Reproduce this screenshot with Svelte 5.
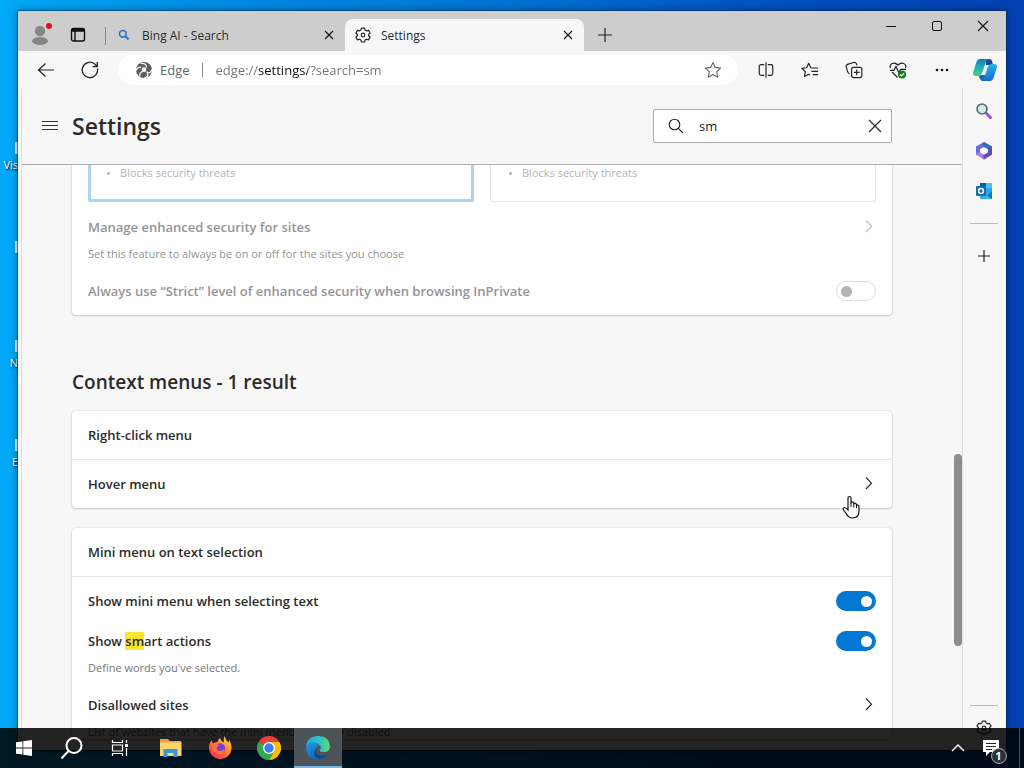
<script>
  let query = "sm";
  let address = "edge://settings/?search=sm";
  let miniMenu = true;
  let smartActions = true;
  let strict = false;

  const shortcuts = ["Vis", "", "N", "E"];
  const levels = [
    { text: "Blocks security threats", selected: true },
    { text: "Blocks security threats", selected: false }
  ];

  // stroke icons of the toolbar, drawn on a 20 x 20 grid
  const tools = [
    { name: "Split screen", d: "M8 4H4.500Q2.500 4 2.500 6v8Q2.500 16 4.500 16H8M12 4h3.500Q17.500 4 17.500 6v8Q17.500 16 15.500 16H12M10 1.500v17" },
    { name: "Favorites", d: "M12.500 7.800 10.800 7.500 8.500 2.500 6.200 7.500 1 8.200 4.800 11.900 3.900 17.300 8.500 14.800 10 15.600M12 7.800h7M11.500 11.500H19M13 15.200h6" },
    { name: "Collections", d: "M9.500 7h7q2.200 0 2.200 2.200v7q0 2.200-2.200 2.200h-7q-2.200 0-2.200-2.200v-7Q7.300 7 9.500 7zM13 9.500v6.400M9.800 12.700h6.400M5 14Q3.500 13.700 3 12L1.300 6.500Q.8 4.500 2.700 3.800L9.500 1.600Q11.800 1 12.700 3L13.300 4.800" }
  ];
</script>

<div class="desktop">
  <div class="shortcuts">
    {#each shortcuts as label}
      <div class="shortcut"><i></i><span>{label}</span></div>
    {/each}
  </div>

  <div class="window">
    <div class="tabstrip">
      <button class="avatar" aria-label="Profile">
        <svg width="24" height="26" viewBox="0 0 24 26">
          <circle cx="12" cy="12" r="5.200" fill="#858585" />
          <ellipse cx="12" cy="22" rx="8" ry="4" fill="#858585" />
          <circle cx="21" cy="7" r="3" fill="#e0101c" />
        </svg>
      </button>
      <button class="workspaces" aria-label="Tab actions">
        <svg width="16" height="16" viewBox="0 0 16 16" fill="none" stroke="#111" stroke-width="1.400">
          <rect x="1.500" y="1.500" width="13" height="12.500" rx="2" />
          <path d="M1.500 4h13M5 4v10" /><path d="M2 2.800h12" stroke-width="2.500" />
        </svg>
      </button>
      <span class="rule"></span>
      <div class="tab">
        <svg width="14" height="14" viewBox="0 0 14 14" fill="none" stroke="#2878c4" stroke-width="1.600">
          <circle cx="5.800" cy="5.800" r="3.300" /><path d="M8.300 8.300 11.500 11.500" stroke-width="2.200" />
        </svg>
        <span>Bing AI - Search</span>
        <button aria-label="Close tab">
          <svg width="10" height="10" viewBox="0 0 10 10" stroke="#111" stroke-width="1.100"><path d="m1 1 8 8M9 1 1 9" /></svg>
        </button>
      </div>
      <div class="tab active">
        <svg width="18" height="18" viewBox="0 0 20 20" fill="none" stroke="#222" stroke-width="1.300">
          <circle cx="10" cy="10" r="2" />
          <path d="M8.300 2.300h3.400l.6 2.200 1.500.9 2.300-.6 1.800 3L16.300 9.400v1.400l1.600 1.600-1.800 3-2.300-.7-1.500.9-.6 2.200H8.300l-.6-2.200-1.500-.9-2.300.7-1.800-3 1.700-1.600V9.400L2.100 7.800l1.800-3 2.300.6 1.500-.9z" stroke-linejoin="round" />
        </svg>
        <span>Settings</span>
        <button aria-label="Close tab">
          <svg width="10" height="10" viewBox="0 0 10 10" stroke="#111" stroke-width="1.100"><path d="m1 1 8 8M9 1 1 9" /></svg>
        </button>
      </div>
      <button class="newtab" aria-label="New tab">
        <svg width="14" height="14" viewBox="0 0 14 14" stroke="#222" stroke-width="1.200"><path d="M7 0v14M0 7h14" /></svg>
      </button>
      <div class="controls">
        <button aria-label="Minimize"><svg width="12" height="12" viewBox="0 0 12 12" stroke="#111"><path d="M1 6.500h10" /></svg></button>
        <button aria-label="Maximize"><svg width="12" height="12" viewBox="0 0 12 12" fill="none" stroke="#111"><rect x="1.500" y="1.500" width="9" height="9" rx="1.500" /></svg></button>
        <button aria-label="Close"><svg width="12" height="12" viewBox="0 0 12 12" stroke="#111" stroke-width="1.100"><path d="m1 1 10 10M11 1 1 11" /></svg></button>
      </div>
    </div>

    <div class="toolbar">
      <button class="tool" aria-label="Back">
        <svg width="18" height="18" viewBox="0 0 18 18" fill="none" stroke="#222" stroke-width="1.200"><path d="M17 9H1.500M8.500 2.500 1.500 9l7 6.500" /></svg>
      </button>
      <button class="tool" aria-label="Refresh">
        <svg width="18" height="18" viewBox="0 0 18 18" fill="none" stroke="#222" stroke-width="1.300"><path d="M16.500 7.500A7.700 7.700 0 1 1 13.500 2.700L16 5.200M16.300 1v4.700h-4.700" /></svg>
      </button>
      <div class="address">
        <svg width="16" height="16" viewBox="0 0 16 16">
          <circle cx="8" cy="8" r="8" fill="#5e5e5e" />
          <path d="M4.500 1.500Q11 .8 10.300 5.500M0 8.500Q1.500 4.300 5.200 5.300M3.800 14.500Q3.300 10 6.800 9.700M8.500 15.800Q13.500 14.500 11 10.500M15.800 7.500Q14.500 12.500 10.500 9.800" fill="none" stroke="#fff" stroke-width="1.200" />
          <circle cx="8" cy="7.700" r="2.400" fill="#fff" />
        </svg>
        <label for="address">Edge</label>
        <span class="rule"></span>
        <input id="address" type="text" bind:value={address} spellcheck="false" />
        <button aria-label="Add to favorites">
          <svg width="18" height="18" viewBox="0 0 18 18" fill="none" stroke="#666" stroke-width="1.100" stroke-linejoin="round"><path d="m9 1.500 2.300 4.900 5.300.7-3.900 3.700 1 5.400L9 13.600l-4.700 2.600 1-5.400L1.400 7.100l5.300-.7z" /></svg>
        </button>
      </div>
      {#each tools as tool}
        <button class="tool" aria-label={tool.name}>
          <svg width="18" height="18" viewBox="0 0 20 20" fill="none" stroke="#222" stroke-width="1.300" stroke-linejoin="round"><path d={tool.d} /></svg>
        </button>
      {/each}
      <button class="tool" aria-label="Browser essentials">
        <svg width="18" height="18" viewBox="0 0 18 18" fill="none" stroke="#222" stroke-width="1.200">
          <path d="M1.500 7C0 3 5 0 9 4c4-4 9-1 7.500 3M3 11l5.500 5.500M1 9.300h4l2-4 3 6.500 1.700-3.500H17" />
          <circle cx="13" cy="13.500" r="4" fill="#16801a" stroke="none" /><path d="m11.200 13.500 1.300 1.300 2.400-2.500" stroke="#fff" />
        </svg>
      </button>
      <button class="tool" aria-label="Settings and more">
        <svg width="16" height="4" viewBox="0 0 16 4" fill="#111"><circle cx="3" cy="2" r="1.300" /><circle cx="8" cy="2" r="1.300" /><circle cx="13" cy="2" r="1.300" /></svg>
      </button>
      <button class="tool copilot" aria-label="Copilot">
        <svg width="24" height="22" viewBox="0 0 24 22">
          <defs>
            <linearGradient id="cpa" x1="0" y1="0" x2="0" y2="1"><stop stop-color="#157fa8" /><stop offset=".5" stop-color="#20aec0" /><stop offset="1" stop-color="#55cd7d" /></linearGradient>
            <linearGradient id="cpb" x1="0" y1="0" x2="0" y2="1"><stop stop-color="#27b4e4" /><stop offset="1" stop-color="#1468dd" /></linearGradient>
          </defs>
          <path d="M12 0h4q2.500 0 3 2l1 4h-7z" fill="#164a91" />
          <path d="m5 16 2 4q.8 2 3 2h2l2-6z" fill="#1b6f9c" />
          <path d="M7 0h9q-2.500.5-3.300 3L10 12q-1.500 5-4.500 5H3q-4 0-2.800-4L3.500 3Q4.500 0 7 0z" fill="url(#cpa)" />
          <path d="M17 22H8q2.500-.5 3.300-3L14 10q1.500-5 4.500-5H21q4 0 2.800 4L20.500 19q-1 3-3.500 3z" fill="url(#cpb)" />
          <path d="M12.500 6H16q-1.500.7-2 2.500L12.300 14q-.6 2-2.300 2H8q1.300-.6 1.800-2.500l1.500-5.500q.4-1.500 1.200-2z" fill="#eefafc" />
        </svg>
      </button>
    </div>

    <div class="body">
      <main>
        <header>
          <button class="menu" aria-label="Settings menu">
            <svg width="16" height="12" viewBox="0 0 16 12" stroke="#333"><path d="M0 1.500h16M0 5.500h16M0 9.500h16" /></svg>
          </button>
          <h1>Settings</h1>
          <div class="search">
            <svg width="16" height="16" viewBox="0 0 16 16" fill="none" stroke="#222" stroke-width="1.100"><circle cx="6.500" cy="6.500" r="5.300" /><path d="m10.300 10.300 4.700 4.700" /></svg>
            <input type="text" aria-label="Search settings" bind:value={query} />
            <button aria-label="Clear search" on:click={() => (query = "")}>
              <svg width="14" height="14" viewBox="0 0 14 14" stroke="#222" stroke-width="1.100"><path d="m1 1 12 12M13 1 1 13" /></svg>
            </button>
          </div>
        </header>

        <div class="content">
          <section class="card security">
            <div class="levels">
              {#each levels as level}
                <div class="level" class:selected={level.selected}><ul><li>{level.text}</li></ul></div>
              {/each}
            </div>
            <div class="row">
              <span>Manage enhanced security for sites</span>
              <svg class="chevron" width="8" height="14" viewBox="0 0 8 14" fill="none" stroke="currentColor" stroke-width="1.200"><path d="m1 .5 5.500 5.700L1 12" /></svg>
            </div>
            <p>Set this feature to always be on or off for the sites you choose</p>
            <div class="row">
              <label for="strict">Always use “Strict” level of enhanced security when browsing InPrivate</label>
              <input id="strict" type="checkbox" role="switch" disabled bind:checked={strict} />
            </div>
          </section>

          <h2>Context menus - 1 result</h2>

          <section class="card">
            <div class="row head"><span>Right-click menu</span></div>
            <div class="row link">
              <span>Hover menu</span>
              <svg class="chevron" width="8" height="14" viewBox="0 0 8 14" fill="none" stroke="currentColor" stroke-width="1.200"><path d="m1 .5 5.500 5.700L1 12" /></svg>
            </div>
          </section>

          <section class="card mini">
            <div class="row head"><span>Mini menu on text selection</span></div>
            <div class="row">
              <label for="mini">Show mini menu when selecting text</label>
              <input id="mini" type="checkbox" role="switch" bind:checked={miniMenu} />
            </div>
            <div class="row">
              <label for="smart">Show <mark>sm</mark>art actions</label>
              <input id="smart" type="checkbox" role="switch" bind:checked={smartActions} />
            </div>
            <p>Define words you've selected.</p>
            <div class="row">
              <span>Disallowed sites</span>
              <svg class="chevron" width="8" height="14" viewBox="0 0 8 14" fill="none" stroke="currentColor" stroke-width="1.200"><path d="m1 .5 5.500 5.700L1 12" /></svg>
            </div>
            <p>List of websites that have the mini menu currently disabled</p>
          </section>
        </div>
        <div class="thumb"></div>
      </main>

      <aside>
        <button aria-label="Search">
          <svg width="18" height="18" viewBox="0 0 18 18"><path d="m11.500 11.500 4 4" stroke="#a04be6" stroke-width="3" stroke-linecap="round" /><circle cx="7" cy="7" r="5" fill="#c9ecee" stroke="#5c6468" stroke-width="1.600" /></svg>
        </button>
        <button aria-label="Microsoft 365">
          <svg width="18" height="18" viewBox="0 0 18 18">
            <path d="m9 0 8 4.500v4.300L9 5 5 7v7.500L1 12.500v-8z" fill="#6a6fd6" />
            <path d="m9 0 8 4.500V12l-4-1.500V7L7 3.500z" fill="#2d6fb8" />
            <path d="m1 12 4-2 4 3 4-2.500 4 2L9 18z" fill="#b07ae0" /><path d="m13 7 4-2.500v8L9 17l-1-3.500 5-3z" fill="#5a4bc0" />
            <circle cx="9" cy="9" r="3" fill="#fff" />
          </svg>
        </button>
        <button aria-label="Outlook">
          <svg width="18" height="18" viewBox="0 0 18 18">
            <rect x="5" y="1" width="12" height="16" rx="1" fill="#28a8ea" /><path d="M5 1h6v5H5z" fill="#0d5ea0" /><path d="M11 1h6v5h-6z" fill="#4cc0f0" />
            <path d="m17 9-8 8h8z" fill="#1470b8" /><path d="m8 11 9 6H7z" fill="#36b4e8" /><rect x="1" y="4" width="10" height="10" rx="1" fill="#0f6cbd" /><circle cx="6" cy="9" r="2.400" fill="none" stroke="#fff" stroke-width="1.500" />
          </svg>
        </button>
        <hr />
        <button aria-label="Customize">
          <svg width="12" height="12" viewBox="0 0 12 12" stroke="#222" stroke-width="1.200"><path d="M6 0v12M0 6h12" /></svg>
        </button>
        <hr class="last" />
        <button class="gear" aria-label="Sidebar settings">
          <svg width="18" height="18" viewBox="0 0 20 20" fill="none" stroke="#222" stroke-width="1.300">
            <circle cx="10" cy="10" r="2" />
            <path d="M8.300 2.300h3.400l.6 2.200 1.500.9 2.300-.6 1.800 3L16.300 9.400v1.400l1.600 1.600-1.800 3-2.300-.7-1.500.9-.6 2.200H8.300l-.6-2.200-1.500-.9-2.300.7-1.800-3 1.700-1.600V9.400L2.100 7.800l1.800-3 2.300.6 1.500-.9z" stroke-linejoin="round" />
          </svg>
        </button>
      </aside>
    </div>
  </div>

  <nav class="taskbar">
    <button aria-label="Start">
      <svg width="16" height="16" viewBox="0 0 16 16" fill="#fff"><path d="m0 2.300 6.500-.9v6.200H0zM7.300 1.300 16 0v7.600H7.300zM0 8.400h6.500v6.200L0 13.700zM7.300 8.400H16V16l-8.700-1.200z" /></svg>
    </button>
    <button aria-label="Search">
      <svg width="24" height="24" viewBox="0 0 24 24" fill="none" stroke="#fff" stroke-width="2"><circle cx="14" cy="9.500" r="7.500" /><path d="M8.500 15 1.500 22.500" /></svg>
    </button>
    <button aria-label="Task view">
      <svg width="18" height="16" viewBox="0 0 18 16" fill="none" stroke="#fff" stroke-width="1.200"><path d="M1.500 0v2.500h10V0M1.500 16v-2.500h10V16M1.500 5h10v6h-10zM15.500 0v3M15.500 8v8" /><path d="M14 4h3v3h-3z" fill="#fff" stroke="none" /></svg>
    </button>
    <span class="gap"></span>
    <button aria-label="File Explorer">
      <svg width="24" height="20" viewBox="0 0 24 20"><path d="M1 1h8l2 2h11v6H1z" fill="#e8a33a" /><path d="M1 4.500h21.500V18H1z" fill="#ffd56b" /><path d="M4.500 19v-8h14v8h-4v-4h-6v4z" fill="#3b9ad6" /></svg>
    </button>
    <button aria-label="Firefox">
      <svg width="24" height="24" viewBox="0 0 24 24">
        <defs><linearGradient id="ff" x1=".9" y1="0" x2=".2" y2="1"><stop stop-color="#ffe14a" /><stop offset=".45" stop-color="#ff8a27" /><stop offset="1" stop-color="#f2245c" /></linearGradient></defs>
        <path d="M3.500 4.500 5 7.500q2-1.500 4.500-1.500.5-2.500 2.500-4 .8 3 4 4.500Q15 3 16.500 0q1 4 4 6.500 1-1 .5-3 3 5 2.500 9.500A11.300 11.300 0 0 1 1 13q-.5-5 2.500-8.500z" fill="url(#ff)" />
        <circle cx="12" cy="12.500" r="5.300" fill="#7542d9" /><path d="M5 8.500q4-1.500 7 1-3 .3-3.200 2.600Q9 15 12 15q3.500 0 4.500-3 .5 6-5 6.500Q4 18 5 8.500z" fill="#ff7038" />
      </svg>
    </button>
    <button aria-label="Chrome">
      <svg width="24" height="24" viewBox="0 0 24 24">
        <path d="M12 12 1.600 6a12 12 0 0 1 20.800 0z" fill="#ea4335" /><path d="M12 12V6h10.400A12 12 0 0 1 12 24l5-9z" fill="#fbbc05" /><path d="M12 12 1.600 6A12 12 0 0 0 12 24l5.200-9z" fill="#34a853" />
        <circle cx="12" cy="12" r="6" fill="#fff" /><circle cx="12" cy="12" r="4.700" fill="#3b7ff0" />
      </svg>
    </button>
    <button class="running" aria-label="Microsoft Edge">
      <svg width="24" height="24" viewBox="0 0 24 24">
        <defs>
          <linearGradient id="ea" x1="0" y1="0" x2="1" y2="0"><stop stop-color="#29a6e8" /><stop offset=".6" stop-color="#30c4c0" /><stop offset="1" stop-color="#66dc65" /></linearGradient>
          <linearGradient id="eb" x1="0" y1="0" x2="1" y2="1"><stop stop-color="#1d9be6" /><stop offset="1" stop-color="#0c4c94" /></linearGradient>
        </defs>
        <path d="M0 11Q1 0 12.500 0 23.500.5 24 10.500 23.500 16 18 16q-4 0-4.500-1.500Q16 12 14 9.500 11 6.500 7 7.500 3 8 0 11z" fill="url(#ea)" />
        <path d="M0 11.500Q2.500 6 8 6.500q5 .5 6.500 5-4-2.500-5 2Q9.500 19 16 20q3 .3 6-2-4 6-10.500 6Q.5 23 0 11.500z" fill="url(#eb)" />
        <path d="M9.300 13.500Q9.500 19 15.500 20q3 .3 6.500-2-4 5-10 4-6-2-2.700-8.500z" fill="#0b4587" />
      </svg>
    </button>
    <span class="fill"></span>
    <button class="up" aria-label="Show hidden icons">
      <svg width="14" height="8" viewBox="0 0 14 8" fill="none" stroke="#fff" stroke-width="1.400"><path d="m1 7 6-6 6 6" /></svg>
    </button>
    <button aria-label="Notifications">
      <svg width="18" height="18" viewBox="0 0 18 18"><path d="M1 1h16v12H8l-4 4v-4H1z" fill="#fff" /><path d="M4 4.500h10M4 7.500h10M4 10.500h6" stroke="#222" /></svg>
      <b>1</b>
    </button>
    <span class="peek"></span>
  </nav>

  <svg class="pointer" width="18" height="24" viewBox="0 0 18 24">
    <path d="M6 14V3q0-1.500 1.500-1.500T9 3v5.500V7q2.800-.6 2.800 1.500 2.700-.6 2.700 1.500 2.500-.3 2.500 2v4q0 7-6.500 7Q6.500 23 4.500 19L1.200 14.500Q.8 12.500 2.500 12.500 4 12.500 6 15z" fill="#fff" stroke="#111" stroke-width="1.200" />
    <path d="M9 8v4M11.800 9v3.500M14.500 10v3" stroke="#111" />
  </svg>
</div>

<style>
  :global(body) {
    margin: 0;
  }
  .desktop {
    position: relative;
    height: 100vh;
    overflow: hidden;
    background: linear-gradient(90deg, #00a8f6 0, #008de4 20%, #0072d4 50%, #0052c0 75%, #0340b3 100%);
    font-family: "Open Sans", "Noto Sans", sans-serif;
    font-size: 13px;
    color: #2b2b2b;
  }
  button {
    display: flex;
    align-items: center;
    justify-content: center;
    flex: none;
    padding: 0;
    border: 0;
    background: none;
    font: inherit;
  }
  svg {
    flex: none;
  }

  .shortcuts {
    width: 18px;
    padding-top: 142px;
    overflow: hidden;
  }
  .shortcut {
    display: flex;
    flex-direction: column;
    align-items: flex-end;
    height: 99px;
    font-size: 11px;
    line-height: 16px;
    color: #fff;
    text-shadow: 1px 1px 2px #000;
  }
  .shortcut i {
    width: 3px;
    height: 12px;
    margin-bottom: 3px;
    background: #d5e9f5;
  }

  .window {
    position: absolute;
    inset: 11px 18px 18px;
    display: flex;
    flex-direction: column;
    background: #f7f7f7;
    box-shadow: 0 0 0 1px rgba(0, 40, 80, 0.5), 0 0 8px rgba(0, 0, 0, 0.4);
  }
  .tabstrip {
    display: flex;
    align-items: flex-end;
    height: 40px;
    background: #cdcdcd;
    font-size: 12px;
  }
  .avatar {
    width: 24px;
    height: 38px;
    margin-left: 10px;
  }
  .workspaces {
    width: 24px;
    height: 32px;
    margin: 0 15px 0 14px;
  }
  .rule {
    width: 1px;
    height: 18px;
    background: #888;
  }
  .tabstrip .rule {
    margin-bottom: 6px;
  }
  .tab {
    display: flex;
    align-items: center;
    flex: 0 1 239px;
    min-width: 0;
    height: 32px;
    box-sizing: border-box;
    padding: 0 8px 0 11px;
    border-radius: 8px 8px 0 0;
  }
  .tab span {
    flex: 1;
    padding-left: 11px;
    white-space: nowrap;
  }
  .tab button {
    width: 16px;
    height: 16px;
  }
  .tab.active {
    padding-left: 9px;
    background: #f7f7f7;
  }
  .tab.active span {
    padding-left: 9px;
  }
  .newtab {
    width: 42px;
    height: 32px;
  }
  .controls {
    display: flex;
    align-self: flex-start;
    margin-left: auto;
  }
  .controls button {
    width: 46px;
    height: 30px;
  }

  .toolbar {
    display: flex;
    align-items: center;
    height: 38px;
    padding-left: 6px;
  }
  .tool {
    width: 44px;
    height: 32px;
  }
  .tool.copilot {
    width: 42px;
  }
  .address {
    display: flex;
    align-items: center;
    flex: 1;
    min-width: 0;
    height: 30px;
    margin: 0 6px;
    padding: 0 16px 0 18px;
    box-sizing: border-box;
    border-radius: 15px;
    background: #fff;
    color: #666;
  }
  .address label {
    padding: 0 12px 0 8px;
  }
  .address .rule {
    height: 14px;
  }
  .address input {
    flex: 1;
    min-width: 0;
    padding: 0 0 0 13px;
    border: 0;
    outline: 0;
    font: inherit;
    color: transparent;
    /* the host part is darker than the rest of the url */
    background: linear-gradient(90deg, #727272 55px, #111 55px 105px, #727272 105px);
    background-clip: text;
    -webkit-background-clip: text;
  }

  .body {
    display: flex;
    flex: 1;
    min-height: 0;
  }
  main {
    position: relative;
    display: flex;
    flex-direction: column;
    flex: 1;
    min-width: 0;
    margin-left: 3px;
    border: 1px solid #dedede;
    border-width: 0 1px;
  }
  header {
    display: flex;
    align-items: center;
    flex: none;
    height: 73px;
    padding: 0 70px 2px 20px;
    border-bottom: 1px solid #adadad;
  }
  h1,
  h2 {
    margin: 0;
    font-weight: 600;
  }
  h1 {
    padding-left: 14px;
    font-size: 23px;
    line-height: 30px;
  }
  .search {
    display: flex;
    align-items: center;
    width: 239px;
    height: 34px;
    margin-left: auto;
    padding: 0 9px 0 14px;
    box-sizing: border-box;
    border: 1px solid #aaa;
    border-radius: 2px;
    background: #fff;
  }
  .search input {
    flex: 1;
    min-width: 0;
    padding: 0 0 0 15px;
    border: 0;
    outline: 0;
    font: inherit;
    color: #242424;
    background: none;
  }

  .content {
    flex: 1;
    min-height: 0;
    padding: 0 70px 0 50px;
    overflow: hidden;
  }
  .card {
    border-radius: 4px;
    background: #fff;
    box-shadow: 0 0 2px rgba(0, 0, 0, 0.2), 0 1px 2px rgba(0, 0, 0, 0.14);
  }
  .security {
    padding-bottom: 4px;
    border-radius: 0 0 4px 4px;
    color: #949494;
  }
  .levels {
    display: grid;
    grid-template-columns: 1fr 1fr;
    gap: 16px;
    padding: 0 16px 5px;
  }
  .level {
    height: 37px;
    box-sizing: border-box;
    padding-left: 3px;
    border: 1px solid #e6e6e6;
    border-top: 0;
    border-radius: 0 0 3px 3px;
  }
  .level.selected {
    padding-left: 1px;
    border: 3px solid #acd4f0;
    border-top: 0;
  }
  .level ul {
    margin: 0;
    padding-left: 28px;
    font-size: 11px;
    line-height: 15px;
    color: #b4b4b4;
  }
  .level li::marker {
    font-size: 8px;
  }
  .row {
    display: flex;
    align-items: center;
    justify-content: space-between;
    height: 40px;
    padding: 0 16px;
    font-weight: 600;
  }
  .row.head {
    height: 48px;
    border-bottom: 1px solid #e5e5e5;
  }
  .row.link {
    height: 48px;
  }
  .card p {
    margin: 0 0 10px;
    padding: 0 16px;
    font-size: 11px;
    line-height: 14px;
    color: #767676;
  }
  .card.security p {
    color: #949494;
  }
  .chevron {
    margin-right: 3px;
  }
  .security .chevron {
    color: #bbb;
  }
  h2 {
    padding: 54px 0 16px;
    font-size: 19px;
    line-height: 26px;
  }
  .mini {
    margin-top: 20px;
  }
  .mini .head {
    margin-bottom: 4px;
  }
  mark {
    background: #fbe52f;
    color: inherit;
  }
  input[type="checkbox"] {
    display: flex;
    align-items: center;
    justify-content: flex-end;
    width: 40px;
    height: 20px;
    box-sizing: border-box;
    margin: 0;
    padding: 4px;
    appearance: none;
    border-radius: 10px;
    background: #0078d4;
  }
  input[type="checkbox"]::before {
    content: "";
    width: 11px;
    height: 11px;
    border-radius: 50%;
    background: #fff;
  }
  input[type="checkbox"]:not(:checked) {
    justify-content: flex-start;
    border: 1px solid #ddd;
    background: #fff;
  }
  input[type="checkbox"]:not(:checked)::before {
    background: #b3b3b3;
  }
  .thumb {
    position: absolute;
    top: 365px;
    right: 0;
    width: 8px;
    height: 192px;
    border-radius: 4px;
    background: #8e8e8e;
  }

  aside {
    display: flex;
    flex-direction: column;
    align-items: center;
    width: 43px;
    box-sizing: border-box;
    padding: 2px 2px 0 0;
  }
  aside button {
    width: 40px;
    height: 40px;
  }
  aside .gear {
    height: 44px;
  }
  aside hr {
    width: 28px;
    margin: 12px 0;
    border: 0;
    border-top: 1px solid #bbb;
  }
  aside .last {
    margin: auto 0 0;
  }

  .taskbar {
    position: absolute;
    inset: auto 0 0;
    display: flex;
    height: 40px;
    background: rgba(0, 0, 0, 0.86);
  }
  .taskbar button {
    width: 48px;
    margin-right: 1px;
  }
  .taskbar button:nth-child(-n + 3) {
    margin-right: 0;
  }
  .gap {
    width: 3px;
  }
  .taskbar .running {
    background: #4e5357;
    box-shadow: inset 0 -2px #76b9ed;
  }
  .fill {
    flex: 1;
  }
  .taskbar .up {
    width: 24px;
    margin: 0;
  }
  .taskbar b {
    align-self: flex-end;
    width: 14px;
    margin: 0 0 4px -9px;
    border: 1px solid #aaa;
    border-radius: 50%;
    background: #2e3338;
    color: #fff;
    font-size: 11px;
    line-height: 14px;
  }
  .peek {
    width: 4px;
    border-left: 1px solid #555;
  }
  .pointer {
    position: absolute;
    left: 842px;
    top: 495px;
  }
</style>
